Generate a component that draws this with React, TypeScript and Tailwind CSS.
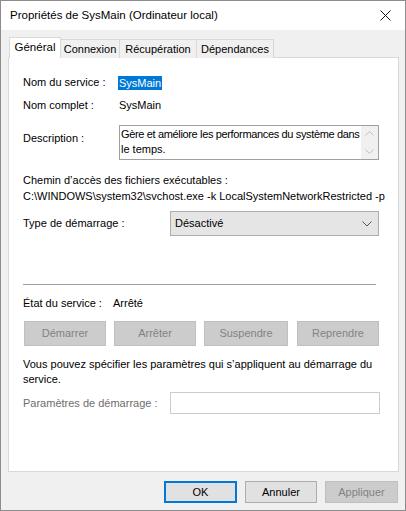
import React from 'react';

const font = { fontFamily: '"Segoe UI", "Liberation Sans", Arial, sans-serif' };

const Tab: React.FC<{ label: string; active?: boolean; w: string }> = ({ label, active, w }) => {
  if (active) {
    return (
      <div className={`${w} h-[21px] -mr-[1px] z-10 bg-white border border-b-0 border-[#d9d9d9] flex items-center justify-center text-[11.5px]`}>
        {label}
      </div>
    );
  }
  return (
    <div className={`${w} h-[19px] mt-[2px] -mr-[1px] bg-[#f0f0f0] border border-b-0 border-[#d9d9d9] flex items-center justify-center pt-[1px]`}>
      {label}
    </div>
  );
};

const GrayButton: React.FC<{ label: string; w: string }> = ({ label, w }) => (
  <div className={`${w} h-[25px] bg-[#cccccc] border border-[#bfbfbf] text-[#838383] flex items-center justify-center`}>
    {label}
  </div>
);

export default function App() {
  return (
    <div
      className="w-[406px] h-[511px] border border-[#8c8c8c] bg-[#f0f0f0] text-[11px] text-black flex flex-col overflow-hidden"
      style={font}
    >
      {/* title bar */}
      <div className="h-[29px] bg-white flex items-center justify-between pl-[9px] pr-[14px] text-[11.5px]">
        <span>Propriétés de SysMain (Ordinateur local)</span>
        <svg width="11" height="11" viewBox="0 0 11 11">
          <path d="M0.5 0.5 L10.5 10.5 M10.5 0.5 L0.5 10.5" stroke="#111" strokeWidth="1" />
        </svg>
      </div>

      <div className="pl-[7px] pt-[7px] flex flex-col">
        {/* tabs */}
        <div className="flex items-end pl-[1px] relative">
          <Tab label="Général" active w="w-[52px]" />
          <Tab label="Connexion" w="w-[60px]" />
          <Tab label="Récupération" w="w-[78px]" />
          <Tab label="Dépendances" w="w-[78px]" />
        </div>

        {/* panel */}
        <div className="w-[391px] h-[415px] -mt-[1px] bg-white border border-[#d9d9d9] pl-[14px] flex flex-col">
          <div className="mt-[17px] h-[15px] flex items-center">
            <span className="w-[96px]">Nom du service :</span>
            <span className="bg-[#0078d7] text-white px-[1px] -ml-[1px] leading-[14px]">SysMain</span>
          </div>
          <div className="mt-[8px] h-[15px] flex items-center">
            <span className="w-[96px]">Nom complet :</span>
            <span>SysMain</span>
          </div>
          <div className="mt-[12px] flex">
            <span className="w-[96px] mt-[5px]">Description :</span>
            <div className="w-[260px] h-[35px] border border-[#a0a0a0] flex">
              <div className="flex-1 pl-[1px] leading-[15px] pt-[1px] overflow-hidden">
                <div className="whitespace-nowrap tracking-[-0.35px]">Gère et améliore les performances du système dans</div>
                <div>le temps.</div>
              </div>
              <div className="w-[17px] bg-[#f0f0f0] flex flex-col items-center justify-between py-[5px]">
                <svg width="9" height="5" viewBox="0 0 9 5">
                  <path d="M0.5 4.5 L4.5 0.5 L8.5 4.5" stroke="#c0c0c0" fill="none" />
                </svg>
                <svg width="9" height="5" viewBox="0 0 9 5">
                  <path d="M0.5 0.5 L4.5 4.5 L8.5 0.5" stroke="#c0c0c0" fill="none" />
                </svg>
              </div>
            </div>
          </div>
          <div className="mt-[12px] leading-[16px]">Chemin d’accès des fichiers exécutables :</div>
          <div className="leading-[16px] whitespace-nowrap">
            C:\WINDOWS\system32\svchost.exe -k LocalSystemNetworkRestricted -p
          </div>
          <div className="mt-[7px] flex items-center">
            <span className="w-[147px]">Type de démarrage :</span>
            <div className="w-[209px] h-[25px] bg-[#e5e5e5] border border-[#adadad] flex items-center justify-between pl-[4px] pr-[6px]">
              <span>Désactivé</span>
              <svg width="10" height="6" viewBox="0 0 10 6">
                <path d="M0.5 0.5 L5 5 L9.5 0.5" stroke="#555" fill="none" />
              </svg>
            </div>
          </div>
          <div className="mt-[48px] w-[353px] h-[1px] bg-[#a0a0a0]" />
          <div className="mt-[11px] h-[15px] flex items-center">
            <span className="w-[90px]">État du service :</span>
            <span>Arrêté</span>
          </div>
          <div className="mt-[10px] flex gap-[8px] pl-[1px]">
            <GrayButton label="Démarrer" w="w-[82px]" />
            <GrayButton label="Arrêter" w="w-[82px]" />
            <GrayButton label="Suspendre" w="w-[84px]" />
            <div className="ml-[1px]">
              <GrayButton label="Reprendre" w="w-[82px]" />
            </div>
          </div>
          <div className="mt-[11px] leading-[15px] w-[360px]">
            Vous pouvez spécifier les paramètres qui s’appliquent au démarrage du service.
          </div>
          <div className="mt-[5px] flex items-center">
            <span className="w-[147px] text-[#6d6d6d]">Paramètres de démarrage :</span>
            <div className="w-[210px] h-[22px] border border-[#cccccc] bg-white" />
          </div>
        </div>

        {/* bottom buttons */}
        <div className="mt-[9px] flex justify-end gap-[8px] pr-[7px]">
          <div className="w-[73px] h-[22px] bg-[#e1e1e1] border-2 border-[#0078d7] flex items-center justify-center">
            OK
          </div>
          <div className="w-[72px] h-[22px] bg-[#e1e1e1] border border-[#adadad] flex items-center justify-center">
            Annuler
          </div>
          <div className="w-[73px] h-[22px] bg-[#cccccc] border border-[#bfbfbf] text-[#838383] flex items-center justify-center">
            Appliquer
          </div>
        </div>
      </div>
    </div>
  );
}
